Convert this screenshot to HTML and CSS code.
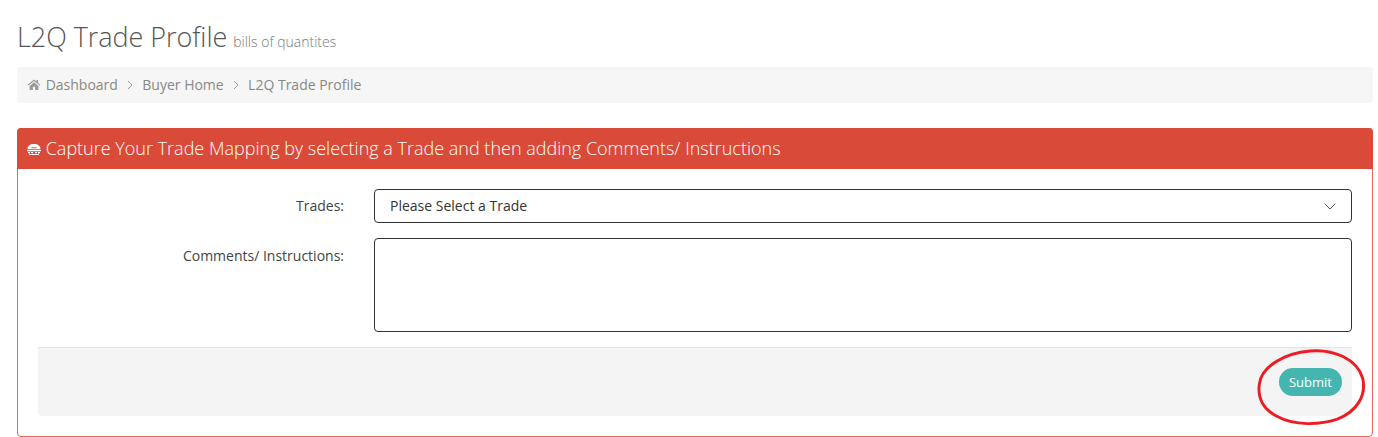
FILE: index.html
```html
<!DOCTYPE html>
<html lang="en">
<head>
    <meta charset="UTF-8">
    <title>L2Q Trade Profile</title>
    <link rel="stylesheet" href="styles.css">
</head>
<body>

    <h1 class="page-title">L2Q Trade Profile <small>bills of quantites</small></h1>

    <!-- Breadcrumb -->
    <ul class="breadcrumb">
        <li class="crumb">
            <svg class="home-icon" viewBox="0 0 24 20" aria-hidden="true"><path d="M12 1 0.500 10.600l1.200 1.400L12 3.500 22.300 12l1.200-1.400L19.500 7.200V2h-3v2.700zM4 12.800V20h6v-6h4v6h6v-7.200L12 6z"/></svg>
            Dashboard
        </li>
        <li class="sep"><svg viewBox="0 0 6 10" aria-hidden="true"><path d="M1 1l4 4-4 4"/></svg></li>
        <li class="crumb">Buyer Home</li>
        <li class="sep"><svg viewBox="0 0 6 10" aria-hidden="true"><path d="M1 1l4 4-4 4"/></svg></li>
        <li class="crumb">L2Q Trade Profile</li>
    </ul>

    <div class="panel">
        <div class="panel-heading">
            <svg class="phone-icon" viewBox="0 0 14 11" aria-hidden="true"><path d="M7 0C3 0 .5 2 .5 5.200h13C13.500 2 11 0 7 0zM4.500 3.200h5v1h-5z" fill-rule="evenodd"/><path d="M0 6h14v1.200H0zM1 8h2v1.200H1zM4 8h2v1.200H4zM8 8h2v1.200H8zM11 8h2v1.200h-2zM2 10h10v1H2z"/></svg>
            Capture Your Trade Mapping by selecting a Trade and then adding Comments/ Instructions
        </div>
        <form class="panel-body">
            <div class="form-row">
                <label class="form-label">Trades:</label>
                <div class="select-box">
                    <span>Please Select a Trade</span>
                    <svg viewBox="0 0 12 7" aria-hidden="true"><path d="M.7.7 6 6l5.300-5.300"/></svg>
                </div>
            </div>
            <div class="form-row">
                <label class="form-label label-top">Comments/ Instructions:</label>
                <textarea class="text-box"></textarea>
            </div>
            <div class="form-footer">
                <button type="button" class="btn-submit">Submit</button>
            </div>
        </form>
    </div>

    <!-- Red hand drawn circle round the submit button -->
    <svg class="markup" viewBox="0 0 112 80" aria-hidden="true"><path d="M54 2C78 0 102 10 108 30c4 18-6 34-26 42-18 6-44 7-62-3C6 62 0 50 2 36 4 18 28 4 54 2z"/></svg>

</body>
</html>
```

FILE: styles.css
```css
body {
    font-family: "Open Sans", sans-serif;
    font-size: 14px;
    color: #555;
    margin: 0;
    padding: 0 5px 0 17px;
    height: 437px;
    overflow: hidden;
    position: relative;
    background: #fff;
}

/* Title */
.page-title {
    font-size: 27px;
    font-weight: 300;
    letter-spacing: -0.05px;
    line-height: 37px;
    color: #555;
    margin: 0;
    padding-top: 18px;
    height: 49px;
}

.page-title small {
    font-size: 14px;
    font-weight: 300;
    letter-spacing: 0;
    color: #777;
    margin-left: -1px;
}

/* Breadcrumb */
.breadcrumb {
    list-style: none;
    display: flex;
    align-items: center;
    height: 36px;
    margin: 0 0 25px;
    padding: 0 10px 2px;
    box-sizing: border-box;
    background-color: #f6f6f6;
    border-radius: 4px;
    color: #888;
}

.breadcrumb .sep {
    display: flex;
    margin: 2px 9.200px 0;
}

.breadcrumb .sep svg {
    width: 6px;
    height: 10px;
    fill: none;
    stroke: #999;
    stroke-width: 1;
}

.home-icon {
    width: 14px;
    height: 11px;
    fill: #999;
    margin-right: 1px;
}

/* Panel */
.panel {
    border: 1px solid #e4695a;
    border-radius: 4px;
    height: 309px;
    box-sizing: border-box;
}

.panel-heading {
    background-color: #d94a38;
    color: #fff;
    font-size: 18px;
    font-weight: 300;
    height: 41px;
    line-height: 40px;
    padding-left: 10px;
    margin: -1px -1px 0;
    border-radius: 4px 4px 0 0;
}

.phone-icon {
    width: 14px;
    height: 11px;
    fill: #fff;
}

.panel-body {
    padding: 20px 20px 0;
}

.form-row {
    display: flex;
    margin-bottom: 15px;
}

.form-label {
    width: 306px;
    margin-right: 30px;
    text-align: right;
    line-height: 34px;
    color: #444;
}

.label-top {
    line-height: 36px;
}

.select-box,
.text-box {
    flex: 1;
    box-sizing: border-box;
    border: 1px solid #333;
    border-radius: 4px;
    background: #fff;
}

.select-box {
    height: 34px;
    display: flex;
    align-items: center;
    justify-content: space-between;
    padding: 0 15px 2px;
    color: #333;
}

.select-box svg {
    width: 12px;
    height: 7px;
    margin-top: 2px;
    fill: none;
    stroke: #555;
    stroke-width: 1;
}

.text-box {
    height: 94px;
    resize: none;
    display: block;
}

.form-footer {
    display: flex;
    justify-content: flex-end;
    align-items: center;
    height: 69px;
    box-sizing: border-box;
    background-color: #f4f4f4;
    border-top: 1px solid #e2e2e2;
    border-radius: 0 0 4px 4px;
    padding-right: 10px;
}

.btn-submit {
    font-family: inherit;
    font-size: 13px;
    color: #fff;
    background-color: #45b6af;
    border: none;
    border-radius: 14px;
    width: 63px;
    height: 28px;
    padding: 0;
}

/* Annotation over the page */
.markup {
    position: absolute;
    left: 1256px;
    top: 349px;
    width: 112px;
    height: 78px;
    fill: none;
    stroke: #ed1c24;
    stroke-width: 3;
}
```
